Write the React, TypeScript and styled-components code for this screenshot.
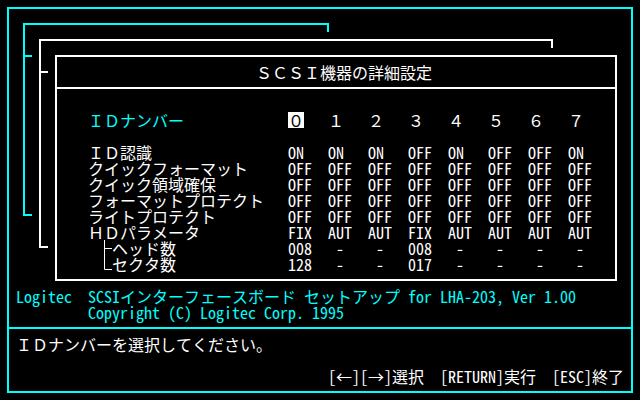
import React from "react";
import styled, { createGlobalStyle } from "styled-components";

const CYAN = "#00ffff";
const WHITE = "#ffffff";
const FONT = `"Noto Sans Mono CJK JP", "Noto Sans CJK JP", "Liberation Mono", monospace`;

const GlobalStyle = createGlobalStyle`
  html, body { margin: 0; padding: 0; background: #000; }
  body { width: 640px; height: 400px; overflow: hidden; font-family: ${FONT}; }
`;

const Screen = styled.div`
  width: 640px;
  height: 400px;
  box-sizing: border-box;
  padding: 7px;
  background: #000;
  font-family: ${FONT};
  font-size: 16px;
  line-height: 16px;
  color: ${WHITE};
`;

const Frame = styled.div`
  width: 100%;
  height: 100%;
  box-sizing: border-box;
  border: 2px solid ${CYAN};
  display: flex;
  flex-direction: column;
`;

const Desk = styled.div`
  position: relative;
  flex: none;
  height: 318px;
  box-sizing: border-box;
  display: flex;
  flex-direction: column;
`;

const BackWindow = styled.div<{ $color: string; $left: number; $top: number; $w: number; $h: number }>`
  position: absolute;
  left: ${(p) => p.$left}px;
  top: ${(p) => p.$top}px;
  width: ${(p) => p.$w}px;
  height: ${(p) => p.$h}px;
  box-sizing: border-box;
  border-top: 2px solid ${(p) => p.$color};
  border-left: 2px solid ${(p) => p.$color};
  &::before {
    content: "";
    position: absolute;
    right: 0;
    top: -2px;
    width: 2px;
    height: 9px;
    background: ${(p) => p.$color};
  }
  &::after {
    content: "";
    position: absolute;
    left: -2px;
    bottom: 0;
    width: 9px;
    height: 2px;
    background: ${(p) => p.$color};
  }
`;

const WindowTick = styled.span<{ $color: string }>`
  position: absolute;
  left: -2px;
  top: 30px;
  width: 9px;
  height: 2px;
  background: ${(p) => p.$color};
`;

const Dialog = styled.section`
  position: relative;
  margin: 46px 0 0 46px;
  width: 562px;
  height: 226px;
  box-sizing: border-box;
  border: 2px solid ${WHITE};
  background: #000;
  display: flex;
  flex-direction: column;
`;

const DialogTitle = styled.header`
  height: 32px;
  box-sizing: border-box;
  border-bottom: 2px solid ${WHITE};
  padding: 7px 0 0 199px;
  white-space: pre;
`;

const SettingsGrid = styled.div`
  display: grid;
  grid-template-columns: 200px repeat(8, 40px);
  grid-auto-rows: 16px;
  padding: 23px 0 0 31px;
`;

const Label = styled.div<{ $accent?: boolean }>`
  display: flex;
  align-items: flex-start;
  white-space: pre;
  color: ${(p) => (p.$accent ? CYAN : WHITE)};
`;

const Spacer = styled.div`
  grid-column: 1 / -1;
`;

const Digit = styled.span<{ $selected?: boolean }>`
  display: block;
  width: 16px;
  height: 16px;
  background: ${(p) => (p.$selected ? WHITE : "transparent")};
  color: ${(p) => (p.$selected ? "#000" : WHITE)};
`;

const Value = styled.div`
  white-space: pre;
`;

const BranchGlyph = styled.svg`
  flex: none;
  display: block;
  margin-left: 16px;
`;

const Credits = styled.div`
  margin-top: 7px;
  padding-left: 7px;
  display: grid;
  grid-template-columns: 72px auto;
  grid-auto-rows: 16px;
  color: ${CYAN};
  white-space: pre;
`;

const StatusPanel = styled.footer`
  flex: 1;
  border-top: 2px solid ${CYAN};
  padding: 7px 7px 0 7px;
  display: flex;
  flex-direction: column;
  gap: 16px;
`;

const Message = styled.div`
  white-space: pre;
`;

const KeyBar = styled.div`
  display: flex;
  justify-content: flex-end;
  gap: 16px;
  white-space: pre;
`;

const Branch: React.FC<{ last?: boolean }> = ({ last }) => (
  <BranchGlyph width="8" height="16" viewBox="0 0 8 16" aria-hidden="true">
    {last ? (
      <path d="M0.5 0V13.5H8" stroke={WHITE} strokeWidth="1" fill="none" />
    ) : (
      <path d="M0.5 0V16M0.5 8.5H8" stroke={WHITE} strokeWidth="1" fill="none" />
    )}
  </BranchGlyph>
);

const digits = ["０", "１", "２", "３", "４", "５", "６", "７"];

type Row = { label: string; branch?: "mid" | "last"; values: string[] };

const rows: Row[] = [
  { label: "ＩＤ認識", values: ["ON", "ON", "ON", "OFF", "ON", "OFF", "OFF", "ON"] },
  { label: "クイックフォーマット", values: Array(8).fill("OFF") },
  { label: "クイック領域確保", values: Array(8).fill("OFF") },
  { label: "フォーマットプロテクト", values: Array(8).fill("OFF") },
  { label: "ライトプロテクト", values: Array(8).fill("OFF") },
  { label: "ＨＤパラメータ", values: ["FIX", "AUT", "AUT", "FIX", "AUT", "AUT", "AUT", "AUT"] },
  { label: "ヘッド数", branch: "mid", values: ["008", " -", " -", "008", " -", " -", " -", " -"] },
  { label: "セクタ数", branch: "last", values: ["128", " -", " -", "017", " -", " -", " -", " -"] },
];

export default function App() {
  return (
    <>
      <GlobalStyle />
      <Screen>
        <Frame>
          <Desk>
            <BackWindow $color={CYAN} $left={14} $top={14} $w={306} $h={193}>
              <WindowTick $color={CYAN} />
            </BackWindow>
            <BackWindow $color={WHITE} $left={30} $top={30} $w={514} $h={209}>
              <WindowTick $color={WHITE} />
            </BackWindow>
            <Dialog>
              <DialogTitle>ＳＣＳＩ機器の詳細設定</DialogTitle>
              <SettingsGrid>
                <Label $accent>ＩＤナンバー</Label>
                {digits.map((d, i) => (
                  <div key={d}>
                    <Digit $selected={i === 0}>{d}</Digit>
                  </div>
                ))}
                <Spacer />
                {rows.map((r) => (
                  <React.Fragment key={r.label}>
                    <Label>
                      {r.branch && <Branch last={r.branch === "last"} />}
                      {r.label}
                    </Label>
                    {r.values.map((v, i) => (
                      <Value key={i}>{v}</Value>
                    ))}
                  </React.Fragment>
                ))}
              </SettingsGrid>
            </Dialog>
            <Credits>
              <span>Logitec</span>
              <span>SCSIインターフェースボード セットアップ for LHA-203, Ver 1.00</span>
              <span />
              <span>Copyright (C) Logitec Corp. 1995</span>
            </Credits>
          </Desk>
          <StatusPanel>
            <Message>ＩＤナンバーを選択してください。</Message>
            <KeyBar>
              <span>[←][→]選択</span>
              <span>[RETURN]実行</span>
              <span>[ESC]終了</span>
            </KeyBar>
          </StatusPanel>
        </Frame>
      </Screen>
    </>
  );
}
